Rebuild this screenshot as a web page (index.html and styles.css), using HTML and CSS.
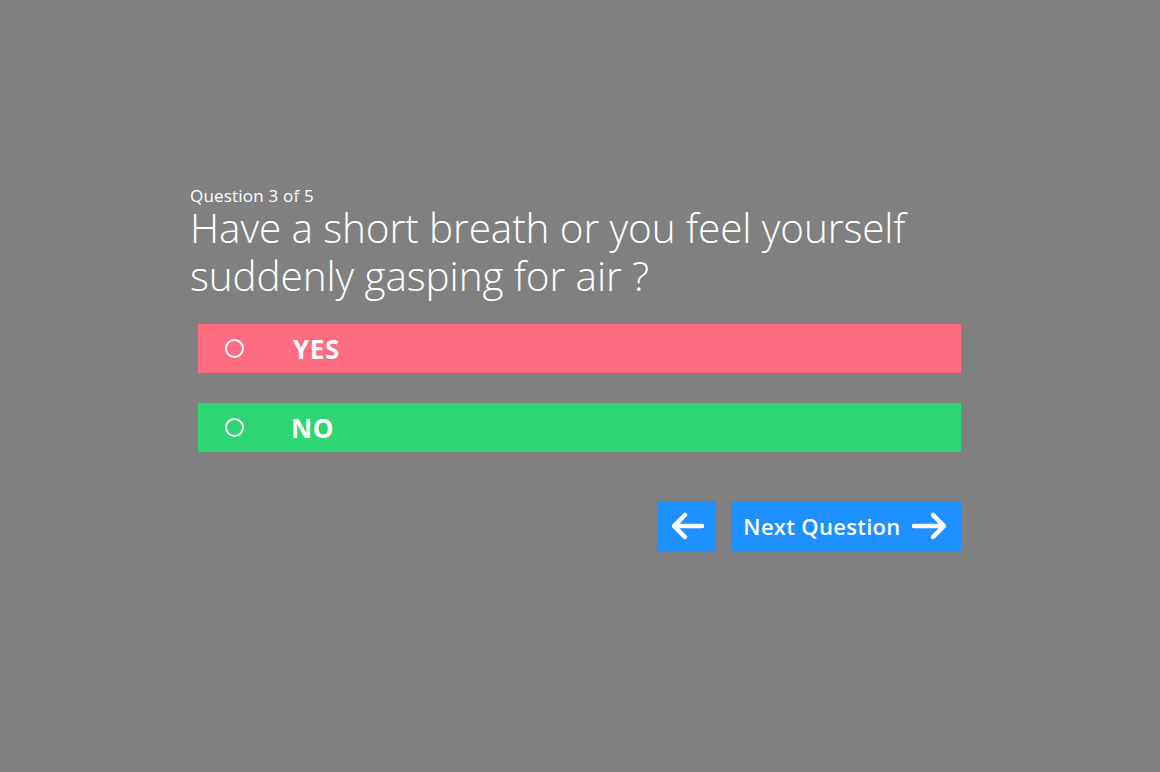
FILE: index.html
```html
<!DOCTYPE html>
<html>
<head>
<meta charset="utf-8">
<link rel="stylesheet" href="styles.css">
</head>
<body>
<div class="quiz">
  <div class="counter">Question 3 of 5</div>
  <h1 class="question">Have a short breath or you feel yourself suddenly gasping for air ?</h1>
  <div class="options">
    <div class="option yes"><span class="radio"></span><span class="label">YES</span></div>
    <div class="option no"><span class="radio"></span><span class="label">NO</span></div>
  </div>
  <div class="nav">
    <button class="btn back" aria-label="Previous">
      <svg width="36" height="30" viewBox="0 0 36 30"><path d="M33 15H5M16 4L5 15l11 11" fill="none" stroke="#fff" stroke-width="4.5" stroke-linecap="round" stroke-linejoin="round"/></svg>
    </button>
    <button class="btn next">
      <span>Next Question</span>
      <svg width="38" height="30" viewBox="0 0 38 30"><path d="M3 15h30M22 4l11 11-11 11" fill="none" stroke="#fff" stroke-width="4.5" stroke-linecap="round" stroke-linejoin="round"/></svg>
    </button>
  </div>
</div>
</body>
</html>
```
FILE: styles.css
```css
html, body {
  margin: 0;
  padding: 0;
  background: #808080;
  height: 100%;
}
body {
  font-family: "Open Sans", "Noto Sans", sans-serif;
  color: #fff;
}
.quiz {
  width: 780px;
  margin: 0 auto;
  padding-top: 186px;
  box-sizing: border-box;
}
.counter {
  font-size: 17px;
  line-height: 20px;
  font-weight: 400;
  letter-spacing: 0.2px;
}
.question {
  margin: 0;
  font-weight: 300;
  font-size: 40.5px;
  line-height: 48px;
  letter-spacing: -0.1px;
  max-width: 760px;
  position: relative;
  top: -2px;
}
.options {
  display: flex;
  flex-direction: column;
  gap: 30px;
  margin: 22px 9px 0 8px;
}
.option {
  height: 49px;
  display: flex;
  align-items: center;
  padding-left: 27px;
}
.yes { background: #ff6b81; }
.no { background: #2ed573; }
.radio {
  width: 15px;
  height: 15px;
  border: 2px solid #fff;
  border-radius: 50%;
  box-sizing: content-box;
}
.label {
  margin-left: 49px;
  font-size: 26px;
  font-weight: 700;
  letter-spacing: 0.6px;
}
.no .label { margin-left: 47px; }
.nav {
  display: flex;
  justify-content: flex-end;
  gap: 15px;
  margin: 49px 9px 0 0;
}
.btn {
  border: 0;
  margin: 0;
  background: #1e90ff;
  color: #fff;
  height: 50px;
  display: flex;
  align-items: center;
  justify-content: center;
  font-family: inherit;
  padding: 0;
}
.back { width: 59px; }
.next {
  width: 230px;
  font-size: 22px;
  font-weight: 600;
  gap: 10px;
  letter-spacing: 0.3px;
}
```
